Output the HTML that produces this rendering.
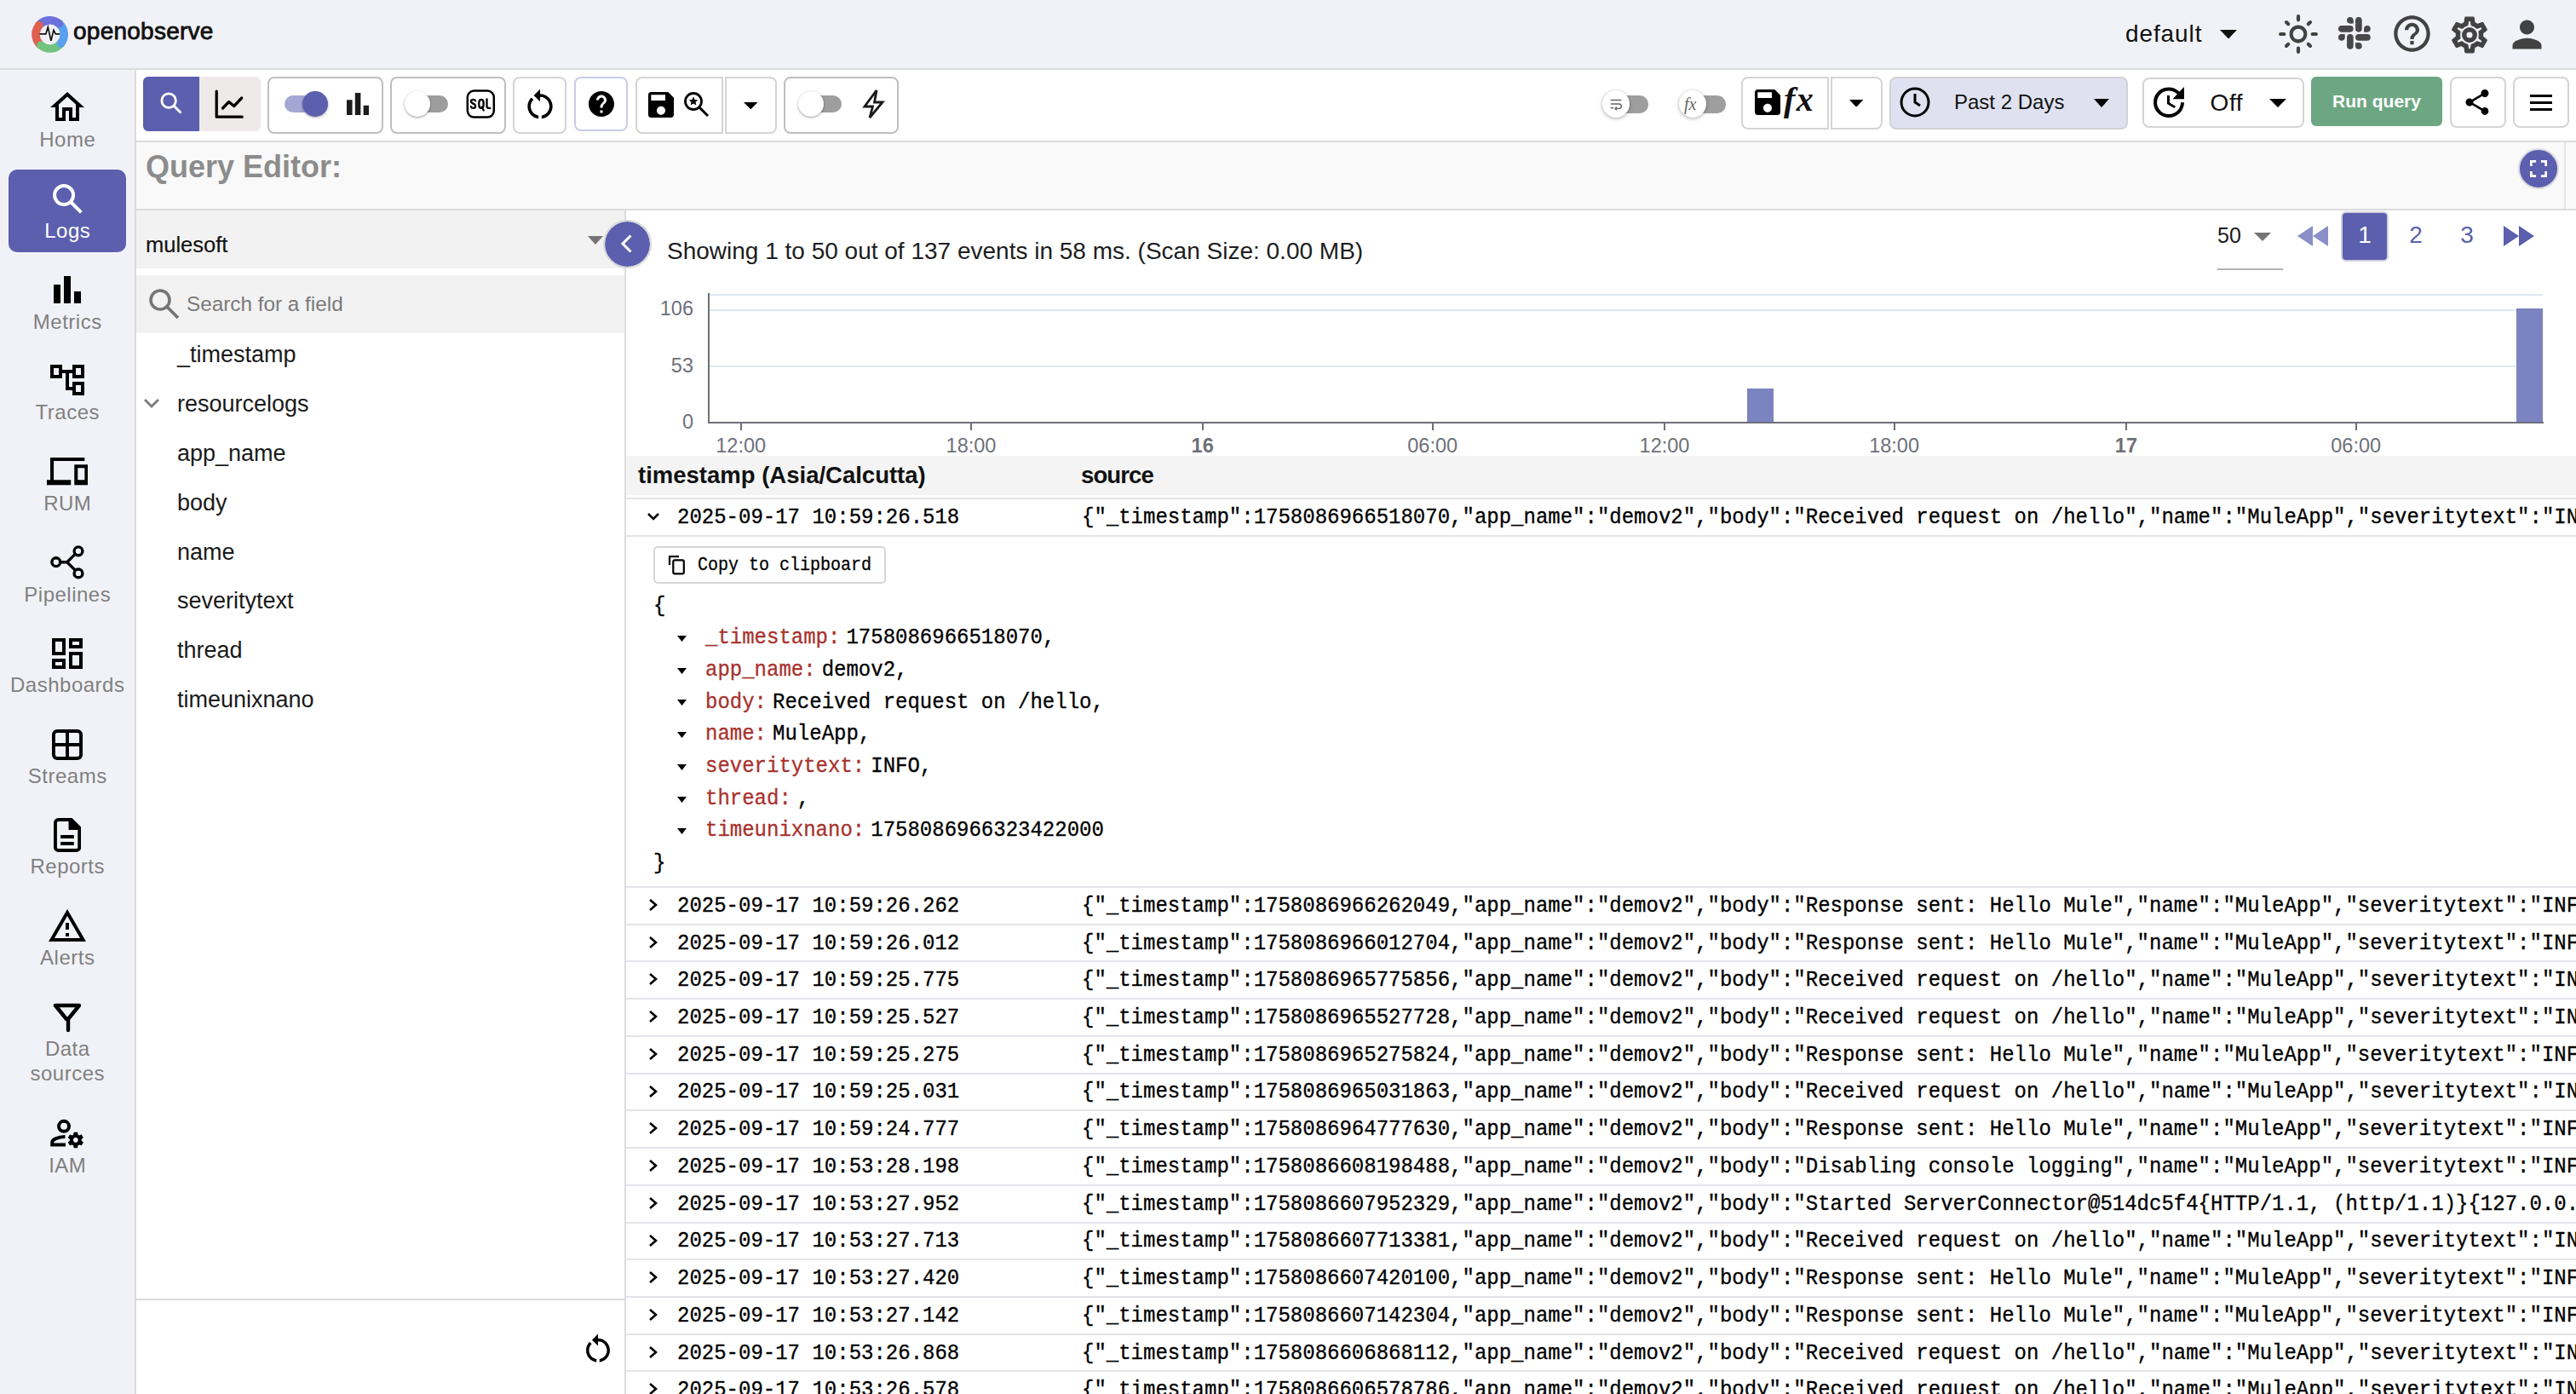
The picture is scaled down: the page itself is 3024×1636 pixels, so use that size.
<!DOCTYPE html>
<html><head><meta charset="utf-8"><title>OpenObserve Logs</title>
<style>
html,body{margin:0;padding:0;width:3024px;height:1636px;overflow:hidden;background:#fff;}
#root{position:relative;width:3024px;height:1636px;overflow:hidden;background:#fff;font-family:'Liberation Sans', sans-serif;}
</style></head><body><div id="root">
<div style="position:absolute;left:0px;top:0px;width:3024px;height:80px;background:#f1f2f7"></div><div style="position:absolute;left:0px;top:80px;width:3024px;height:2px;background:#dcdcdc"></div><svg style="position:absolute;left:37px;top:18.5px;" width="43" height="43" viewBox="0 0 43 43"><g fill="none" stroke-width="9.6"><path d="M8.88 10.73A16.6 16.6 0 0 1 32.27 8.68" stroke="#6c71dc"/><path d="M32.27 8.68A16.6 16.6 0 0 1 34.32 32.07" stroke="#58a0ef"/><path d="M34.32 32.07A16.6 16.6 0 0 1 10.93 34.12" stroke="#72c47e"/><path d="M10.93 34.12A16.6 16.6 0 0 1 8.88 10.73" stroke="#e0604f"/></g><circle cx="32.27" cy="8.68" r="4.8" fill="#6c71dc"/><circle cx="34.32" cy="32.07" r="4.8" fill="#58a0ef"/><circle cx="10.93" cy="34.12" r="4.8" fill="#72c47e"/><circle cx="8.88" cy="10.73" r="4.8" fill="#e0604f"/><path d="M9.5 20.9H16.8L19.3 12.9L22.9 28.9L26 16.4L28.3 20.9H33.2" fill="none" stroke="#111" stroke-width="1.7"/></svg><div style="position:absolute;left:86px;top:23.30px;font-family:'Liberation Sans', sans-serif;font-size:28px;line-height:28px;color:#111;font-weight:400;white-space:pre;letter-spacing:0.25px;-webkit-text-stroke:0.8px #111">openobserve</div><div style="position:absolute;left:2495px;top:26.10px;font-family:'Liberation Sans', sans-serif;font-size:28px;line-height:28px;color:#111;font-weight:400;white-space:pre;letter-spacing:0.9px">default</div><svg style="position:absolute;left:2606px;top:35px;" width="20" height="10.5" viewBox="0 0 20 10.5"><path d="M0 0h20L10 10.5z" fill="#111"/></svg><svg style="position:absolute;left:2673px;top:15px;" width="50" height="50" viewBox="0 0 24 24"><path fill="#424242" d="M12 9c1.65 0 3 1.35 3 3s-1.35 3-3 3-3-1.35-3-3 1.35-3 3-3m0-2c-2.76 0-5 2.24-5 5s2.24 5 5 5 5-2.24 5-5-2.24-5-5-5zM2 13h2c.55 0 1-.45 1-1s-.45-1-1-1H2c-.55 0-1 .45-1 1s.45 1 1 1zm18 0h2c.55 0 1-.45 1-1s-.45-1-1-1h-2c-.55 0-1 .45-1 1s.45 1 1 1zM11 2v2c0 .55.45 1 1 1s1-.45 1-1V2c0-.55-.45-1-1-1s-1 .45-1 1zm0 18v2c0 .55.45 1 1 1s1-.45 1-1v-2c0-.55-.45-1-1-1s-1 .45-1 1zM5.99 4.58c-.39-.39-1.030-.39-1.41 0-.39.39-.39 1.03 0 1.41l1.06 1.06c.39.39 1.03.39 1.41 0s.39-1.03 0-1.41L5.99 4.58zm12.37 12.37c-.39-.39-1.03-.39-1.41 0-.39.39-.39 1.03 0 1.41l1.06 1.06c.39.39 1.03.39 1.41 0 .39-.39.39-1.03 0-1.41l-1.06-1.06zm1.06-10.96c.39-.39.39-1.03 0-1.41-.39-.39-1.03-.39-1.41 0l-1.06 1.06c-.39.39-.39 1.03 0 1.41s1.03.39 1.41 0l1.06-1.06zM7.05 18.36c.39-.39.39-1.03 0-1.41-.39-.39-1.03-.39-1.41 0l-1.06 1.06c-.39.39-.39 1.03 0 1.41s1.03.39 1.41 0l1.06-1.06z"/></svg><svg style="position:absolute;left:2745px;top:20px;" width="38" height="38" viewBox="0 0 38 38"><g fill="#48484a"><circle cx="13.85" cy="3.81" r="3.81"/><rect x="13.85" y="3.81" width="3.81" height="3.81"/><rect x="20.08" y="0.00" width="7.63" height="17.68" rx="3.81"/><rect x="0.00" y="10.04" width="17.68" height="7.63" rx="3.81"/><circle cx="33.93" cy="13.85" r="3.81"/><rect x="30.12" y="13.85" width="3.81" height="3.81"/><circle cx="3.81" cy="23.89" r="3.81"/><rect x="3.81" y="20.08" width="3.81" height="3.81"/><rect x="10.04" y="20.08" width="7.63" height="17.68" rx="3.81"/><rect x="20.08" y="20.08" width="17.68" height="7.63" rx="3.81"/><circle cx="23.89" cy="33.93" r="3.81"/><rect x="20.08" y="30.12" width="3.81" height="3.81"/></g></svg><svg style="position:absolute;left:2806px;top:14px;" width="51" height="51" viewBox="0 0 24 24"><path fill="#424242" d="M11 18h2v-2h-2v2zm1-16C6.48 2 2 6.48 2 12s4.48 10 10 10 10-4.48 10-10S17.52 2 12 2zm0 18c-4.41 0-8-3.59-8-8s3.59-8 8-8 8 3.59 8 8-3.59 8-8 8zm0-14c-2.21 0-4 1.79-4 4h2c0-1.1.9-2 2-2s2 .9 2 2c0 2-3 1.75-3 5h2c0-2.25 3-2.5 3-5 0-2.21-1.79-4-4-4z"/></svg><svg style="position:absolute;left:2874px;top:16px;" width="50" height="50" viewBox="0 0 24 24"><path fill="#424242" d="M19.43 12.98c.04-.32.07-.64.07-.98 0-.34-.03-.66-.07-.98l2.11-1.65c.19-.15.24-.42.12-.64l-2-3.46c-.09-.16-.26-.25-.44-.25-.06 0-.12.01-.17.03l-2.49 1c-.52-.4-1.08-.73-1.69-.98l-.38-2.65C14.46 2.18 14.25 2 14 2h-4c-.25 0-.46.18-.49.42l-.38 2.65c-.61.25-1.17.59-1.690.98l-2.49-1c-.06-.02-.12-.03-.18-.03-.17 0-.34.09-.43.25l-2 3.46c-.13.22-.07.49.12.64l2.11 1.65c-.04.32-.07.65-.07.98 0 .33.03.66.07.98l-2.11 1.65c-.19.15-.24.42-.12.64l2 3.46c.09.16.26.25.44.25.06 0 .12-.01.17-.03l2.49-1c.52.4 1.08.73 1.69.98l.38 2.65c.03.24.24.42.49.42h4c.25 0 .46-.18.49-.42l.38-2.65c.61-.25 1.17-.59 1.69-.98l2.49 1c.06.02.12.03.18.03.17 0 .34-.09.43-.25l2-3.46c.12-.22.07-.49-.12-.64l-2.11-1.65zm-1.98-1.71c.04.31.05.52.05.73 0 .21-.02.43-.05.73l-.14 1.13.89.7 1.08.84-.7 1.21-1.27-.51-1.04-.42-.9.68c-.43.32-.84.56-1.25.73l-1.06.43-.16 1.13-.2 1.35h-1.4l-.19-1.35-.16-1.13-1.06-.43c-.43-.18-.83-.41-1.23-.71l-.91-.7-1.06.43-1.27.51-.7-1.21 1.08-.84.89-.7-.14-1.13c-.03-.31-.05-.54-.05-.74s.02-.43.05-.73l.14-1.13-.89-.7-1.08-.84.7-1.21 1.27.51 1.04.42.9-.68c.43-.32.84-.56 1.25-.73l1.06-.43.16-1.13.2-1.35h1.39l.19 1.35.16 1.13 1.06.43c.43.18.83.41 1.23.71l.91.7 1.06-.43 1.27-.51.7 1.21-1.07.85-.89.7.14 1.13zM12 8c-2.21 0-4 1.79-4 4s1.79 4 4 4 4-1.79 4-4-1.790-4-4-4zm0 6c-1.1 0-2-.9-2-2s.9-2 2-2 2 .9 2 2-.9 2-2 2z" stroke="#424242" stroke-width="0.6"/></svg><svg style="position:absolute;left:2940.5px;top:14.5px;" width="51" height="51" viewBox="0 0 24 24"><path fill="#424242" d="M12 12c2.21 0 4-1.79 4-4s-1.79-4-4-4-4 1.79-4 4 1.79 4 4 4zm0 2c-2.67 0-8 1.34-8 4v2h16v-2c0-2.66-5.33-4-8-4z"/></svg><div style="position:absolute;left:0px;top:82px;width:158px;height:1554px;background:#f1f2f7"></div><div style="position:absolute;left:158px;top:82px;width:2px;height:1554px;background:#dcdcdc"></div><div style="position:absolute;left:10px;top:199px;width:138px;height:97px;background:#5b5fae;border-radius:10px"></div><div style="position:absolute;left:-421px;width:1000px;text-align:center;top:152.28px;font-family:'Liberation Sans', sans-serif;font-size:24px;line-height:24px;color:#808080;font-weight:400;white-space:pre;letter-spacing:0.5px;text-indent:0.5px">Home</div><div style="position:absolute;left:-421px;width:1000px;text-align:center;top:258.93px;font-family:'Liberation Sans', sans-serif;font-size:24px;line-height:24px;color:#fff;font-weight:400;white-space:pre;letter-spacing:0.5px;text-indent:0.5px">Logs</div><div style="position:absolute;left:-421px;width:1000px;text-align:center;top:365.58px;font-family:'Liberation Sans', sans-serif;font-size:24px;line-height:24px;color:#808080;font-weight:400;white-space:pre;letter-spacing:0.5px;text-indent:0.5px">Metrics</div><div style="position:absolute;left:-421px;width:1000px;text-align:center;top:472.23px;font-family:'Liberation Sans', sans-serif;font-size:24px;line-height:24px;color:#808080;font-weight:400;white-space:pre;letter-spacing:0.5px;text-indent:0.5px">Traces</div><div style="position:absolute;left:-421px;width:1000px;text-align:center;top:578.88px;font-family:'Liberation Sans', sans-serif;font-size:24px;line-height:24px;color:#808080;font-weight:400;white-space:pre;letter-spacing:0.5px;text-indent:0.5px">RUM</div><div style="position:absolute;left:-421px;width:1000px;text-align:center;top:685.53px;font-family:'Liberation Sans', sans-serif;font-size:24px;line-height:24px;color:#808080;font-weight:400;white-space:pre;letter-spacing:0.5px;text-indent:0.5px">Pipelines</div><div style="position:absolute;left:-421px;width:1000px;text-align:center;top:792.18px;font-family:'Liberation Sans', sans-serif;font-size:24px;line-height:24px;color:#808080;font-weight:400;white-space:pre;letter-spacing:0.5px;text-indent:0.5px">Dashboards</div><div style="position:absolute;left:-421px;width:1000px;text-align:center;top:898.83px;font-family:'Liberation Sans', sans-serif;font-size:24px;line-height:24px;color:#808080;font-weight:400;white-space:pre;letter-spacing:0.5px;text-indent:0.5px">Streams</div><div style="position:absolute;left:-421px;width:1000px;text-align:center;top:1005.48px;font-family:'Liberation Sans', sans-serif;font-size:24px;line-height:24px;color:#808080;font-weight:400;white-space:pre;letter-spacing:0.5px;text-indent:0.5px">Reports</div><div style="position:absolute;left:-421px;width:1000px;text-align:center;top:1112.13px;font-family:'Liberation Sans', sans-serif;font-size:24px;line-height:24px;color:#808080;font-weight:400;white-space:pre;letter-spacing:0.5px;text-indent:0.5px">Alerts</div><div style="position:absolute;left:-421px;width:1000px;text-align:center;top:1219.28px;font-family:'Liberation Sans', sans-serif;font-size:24px;line-height:24px;color:#808080;font-weight:400;white-space:pre;letter-spacing:0.5px;text-indent:0.5px">Data</div><div style="position:absolute;left:-421px;width:1000px;text-align:center;top:1247.98px;font-family:'Liberation Sans', sans-serif;font-size:24px;line-height:24px;color:#808080;font-weight:400;white-space:pre;letter-spacing:0.5px;text-indent:0.5px">sources</div><div style="position:absolute;left:-421px;width:1000px;text-align:center;top:1355.68px;font-family:'Liberation Sans', sans-serif;font-size:24px;line-height:24px;color:#808080;font-weight:400;white-space:pre;letter-spacing:0.5px;text-indent:0.5px">IAM</div><svg style="position:absolute;left:55px;top:102px;" width="48" height="48" viewBox="0 0 24 24"><path fill="#000" d="M12 5.69l5 4.5V18h-2v-6H9v6H7v-7.81l5-4.5M12 3L2 12h3v8h6v-6h2v6h6v-8h3L12 3z"/></svg><svg style="position:absolute;left:58px;top:212px;" width="44" height="44" viewBox="0 0 40 40"><circle cx="15.5" cy="15.5" r="10" fill="none" stroke="#fff" stroke-width="3.6"/><path d="M22.5 22.5L34 34" stroke="#fff" stroke-width="3.6" stroke-linecap="butt"/></svg><svg style="position:absolute;left:63px;top:324px;" width="32" height="32" viewBox="160 160 640 640"><path fill="#000" d="M640 800v-280h160v280zM400 800v-640h160v640zM160 800v-440h160v440z"/></svg><svg style="position:absolute;left:55px;top:422px;" width="48" height="48" viewBox="0 0 24 24"><path fill="#000" d="M22 11V3h-7v3H9V3H2v8h7V8h2v10h4v3h7v-8h-7v3h-2V8h2v3h7zM7 9H4V5h3v4zm10 6h3v4h-3v-4zm0-10h3v4h-3V5z"/></svg><svg style="position:absolute;left:54.6px;top:528.7px;" width="48.4" height="48.4" viewBox="0 0 24 24"><path fill="#000" d="M4 6h18V4H2v13H0v3h14v-3H4V6zm20 2h-8v12h8V8zm-2 9h-4v-7h4v7z"/></svg><svg style="position:absolute;left:55px;top:636px;" width="48" height="48" viewBox="0 0 48 48"><g fill="none" stroke="#000" stroke-width="3.4"><circle cx="10.8" cy="23.7" r="4.9"/><circle cx="37" cy="10.8" r="4.9"/><circle cx="37" cy="36.9" r="4.9"/><path d="M15.7 23.7H23.7L33.5 14.1M23.7 23.7L33.5 33.4"/></g></svg><svg style="position:absolute;left:55px;top:742.8px;" width="48" height="48" viewBox="0 0 24 24"><path fill="#000" d="M19 5v2h-4V5h4M9 5v6H5V5h4m10 8v6h-4v-6h4M9 17v2H5v-2h4M21 3h-8v6h8V3zM11 3H3v10h8V3zm10 8h-8v10h8V11zm-10 4H3v6h8v-6z"/></svg><svg style="position:absolute;left:61px;top:855.5px;" width="36" height="36" viewBox="0 0 36 36"><g fill="none" stroke="#000" stroke-width="3.9"><rect x="1.95" y="1.95" width="32.1" height="32.1" rx="4.2"/><path d="M18 2v32M2 18h32"/></g></svg><svg style="position:absolute;left:63px;top:960px;" width="32.2" height="40" viewBox="0 0 32.2 40"><path d="M1.95 5.5a3.5 3.5 0 0 1 3.5-3.5H20L30.25 12.3V34.5a3.5 3.5 0 0 1-3.5 3.5H5.45a3.5 3.5 0 0 1-3.5-3.5Z" fill="none" stroke="#000" stroke-width="3.9" stroke-linejoin="round"/><path d="M17.6 0H21.5L32.2 10.7V14.1H17.6Z" fill="#000"/><rect x="8.1" y="20" width="15.7" height="4" fill="#000"/><rect x="8.1" y="28" width="15.7" height="4" fill="#000"/></svg><svg style="position:absolute;left:55.0px;top:1063.0px;" width="48" height="48" viewBox="0 0 24 24"><g fill="#000"><path d="M12 5.99L19.53 19H4.47L12 5.99M12 2L1 21h22L12 2zm1 14h-2v2h2v-2zm0-6h-2v4h2v-4z"/></g></svg><svg style="position:absolute;left:62px;top:1177px;" width="34" height="35" viewBox="0 0 34 35"><path d="M3 3h28L18 19v13M16 19L3 3" fill="none" stroke="#000" stroke-width="4.4" stroke-linejoin="round" stroke-linecap="round"/></svg><svg style="position:absolute;left:55px;top:1308px;" width="45" height="42" viewBox="55 1308 45 42"><g fill="none" stroke="#000" stroke-width="4"><circle cx="75" cy="1321.8" r="6"/><path d="M76.5 1334C68.5 1334.3 61.2 1337 61.2 1340.8V1343.6H77"/></g><path transform="translate(77.3 1326.4) scale(0.96)" fill="#000" d="M19.14 12.94c.04-.3.06-.61.06-.94 0-.32-.02-.64-.07-.94l2.03-1.58c.18-.14.23-.41.12-.61l-1.92-3.32c-.12-.22-.37-.29-.59-.22l-2.39.96c-.5-.38-1.03-.7-1.62-.94l-.36-2.54c-.04-.24-.24-.41-.48-.41h-3.84c-.24 0-.43.17-.47.41l-.36 2.54c-.59.24-1.13.57-1.62.94l-2.39-.96c-.22-.08-.47 0-.59.22L2.74 8.87c-.12.21-.08.47.12.61l2.03 1.58c-.05.3-.09.63-.09.94s.02.64.07.94l-2.03 1.58c-.18.14-.23.41-.12.61l1.92 3.32c.12.22.37.29.59.22l2.39-.96c.5.38 1.03.7 1.62.94l.36 2.54c.05.24.24.41.48.41h3.840c.24 0 .44-.17.47-.41l.36-2.54c.59-.24 1.13-.56 1.62-.94l2.39.96c.22.08.47 0 .59-.22l1.92-3.32c.12-.22.07-.47-.12-.61l-2.01-1.58zM12 15c-1.65 0-3-1.35-3-3s1.35-3 3-3 3 1.35 3 3-1.35 3-3 3z"/></svg><div style="position:absolute;left:160px;top:165px;width:2864px;height:2px;background:#dcdcdc"></div><div style="position:absolute;left:168px;top:90px;width:66px;height:64px;background:#5b5fae;border-radius:6px 0 0 6px"></div><div style="position:absolute;left:234px;top:90px;width:72px;height:64px;background:#eeeaea;border-radius:0 6px 6px 0"></div><svg style="position:absolute;left:185.6px;top:106px;" width="33" height="33" viewBox="0 0 30 30"><circle cx="11" cy="11" r="7.5" fill="none" stroke="#fff" stroke-width="2.6"/><path d="M16.5 16.5L24 24" stroke="#fff" stroke-width="2.6"/></svg><svg style="position:absolute;left:251px;top:104px;" width="37" height="37" viewBox="0 0 37 37"><path d="M3.2 3.2v30h30" fill="none" stroke="#000" stroke-width="3.3" stroke-linecap="round" stroke-linejoin="round"/><path d="M10.5 23l7.2-7.5 6 5 9-9.5" fill="none" stroke="#000" stroke-width="3.3" stroke-linecap="round" stroke-linejoin="round"/></svg><div style="position:absolute;left:314px;top:90px;width:136px;height:67px;box-sizing:border-box;border:2px solid #bfbfbf;border-radius:8px"></div><div style="position:absolute;left:334px;top:112px;width:50px;height:20px;background:#a4a7d4;border-radius:10px"></div><div style="position:absolute;left:355px;top:107px;width:30px;height:30px;background:#5b5fae;border-radius:50%;box-shadow:0 1px 3px rgba(0,0,0,.35)"></div><svg style="position:absolute;left:406.9px;top:108.8px;" width="26.2" height="26.2" viewBox="160 160 640 640"><path fill="#1c1c1c" d="M640 800v-280h160v280zM400 800v-640h160v640zM160 800v-440h160v440z"/></svg><div style="position:absolute;left:458px;top:90px;width:136px;height:67px;box-sizing:border-box;border:2px solid #bfbfbf;border-radius:8px"></div><div style="position:absolute;left:476px;top:112px;width:50px;height:20px;background:#9e9e9e;border-radius:10px"></div><div style="position:absolute;left:475px;top:107px;width:30px;height:30px;background:#fff;border-radius:50%;box-shadow:0 1px 3px rgba(0,0,0,.4)"></div><svg style="position:absolute;left:546px;top:104px;" width="36" height="36" viewBox="0 0 36 36"><rect x="2.8" y="2.6" width="31" height="31" rx="7.5" fill="none" stroke="#000" stroke-width="2.5"/><g fill="none" stroke="#000" stroke-width="2.3" stroke-linecap="round" stroke-linejoin="round"><path d="M12.1 14.2C11.6 13.2 10.6 12.8 9.5 12.8C7.9 12.8 7 13.7 7 15C7 16.5 8.3 17.1 9.6 17.6C11.1 18.2 12.1 18.9 12.1 20.5C12.1 22 11 22.9 9.5 22.9C8.2 22.9 7.2 22.3 6.9 21.2"/><path d="M18.95 12.8C17.3 12.8 16.3 14.1 16.3 16.5V19.2C16.3 21.6 17.3 22.9 18.95 22.9C20.6 22.9 21.6 21.6 21.6 19.2V16.5C21.6 14.1 20.6 12.8 18.95 12.8ZM19.8 21.6L21.7 25.4"/><path d="M25.5 12.3V20.6C25.5 22.2 26.1 22.9 27.4 22.9H29.3"/></g></svg><div style="position:absolute;left:602px;top:90px;width:63px;height:67px;box-sizing:border-box;border:2px solid #d4d4d4;border-radius:8px"></div><svg style="position:absolute;left:612px;top:101px;" width="44" height="44" viewBox="0 0 24 24"><path fill="#000" d="M12 5V2L8 6l4 4V7c3.31 0 6 2.69 6 6 0 2.97-2.17 5.43-5 5.91v2.02c3.95-.49 7-3.85 7-7.93 0-4.42-3.58-8-8-8zm-6 8c0-1.65.67-3.15 1.76-4.24L6.34 7.34C4.9 8.79 4 10.79 4 13c0 4.08 3.05 7.44 7 7.93v-2.02c-2.83-.48-5-2.94-5-5.91z"/></svg><div style="position:absolute;left:674px;top:90px;width:63px;height:64px;box-sizing:border-box;border:2px solid #c9cbe8;border-radius:8px"></div><svg style="position:absolute;left:688px;top:104px;" width="36" height="36" viewBox="0 0 24 24"><path fill="#000" d="M12 2C6.48 2 2 6.48 2 12s4.48 10 10 10 10-4.48 10-10S17.52 2 12 2zm1 17h-2v-2h2v2zm2.07-7.75l-.9.92C13.45 12.9 13 13.5 13 15h-2v-.5c0-1.1.45-2.1 1.17-2.83l1.24-1.26c.37-.36.59-.86.59-1.41 0-1.1-.9-2-2-2s-2 .9-2 2H8c0-2.21 1.79-4 4-4s4 1.79 4 4c0 .88-.36 1.68-.93 2.25z"/></svg><div style="position:absolute;left:746px;top:90px;width:103px;height:67px;box-sizing:border-box;border:2px solid #d4d4d4;border-radius:8px 0 0 8px"></div><div style="position:absolute;left:851px;top:90px;width:61px;height:67px;box-sizing:border-box;border:2px solid #d4d4d4;border-radius:0 8px 8px 0"></div><svg style="position:absolute;left:756px;top:103px;" width="40" height="40" viewBox="0 0 24 24"><path fill="#000" d="M17 3H5c-1.11 0-2 .9-2 2v14c0 1.1.89 2 2 2h14c1.1 0 2-.9 2-2V7l-4-4zm-5 16c-1.66 0-3-1.34-3-3s1.34-3 3-3 3 1.34 3 3-1.34 3-3 3zm3-10H5V5h10v4z"/></svg><svg style="position:absolute;left:802px;top:107px;" width="32" height="32" viewBox="0 0 32 32"><circle cx="12" cy="12" r="9.5" fill="none" stroke="#000" stroke-width="2.8"/><path d="M19 19l10 10" stroke="#000" stroke-width="3"/><path d="M12 6.5l1.6 3.4 3.7.4-2.8 2.5.8 3.6-3.3-1.9-3.3 1.9.8-3.6-2.8-2.5 3.7-.4z" fill="#000"/></svg><svg style="position:absolute;left:872.6px;top:120px;" width="16.6" height="8.3" viewBox="0 0 16.6 8.3"><path d="M0 0h16.6L8.3 8.3z" fill="#000"/></svg><div style="position:absolute;left:920px;top:90px;width:135px;height:67px;box-sizing:border-box;border:2px solid #bfbfbf;border-radius:8px"></div><div style="position:absolute;left:938px;top:112px;width:50px;height:20px;background:#9e9e9e;border-radius:10px"></div><div style="position:absolute;left:937px;top:107px;width:30px;height:30px;background:#fff;border-radius:50%;box-shadow:0 1px 3px rgba(0,0,0,.4)"></div><svg style="position:absolute;left:1009px;top:103px;" width="36" height="38" viewBox="0 0 36 38"><path d="M20 3L6 22h9.5l-3.5 13 15-18h-9.5z" fill="none" stroke="#1a1a1a" stroke-width="2.8" stroke-linejoin="miter"/></svg><div style="position:absolute;left:1897px;top:112px;width:38px;height:21px;background:#9e9e9e;border-radius:10px"></div><div style="position:absolute;left:1881px;top:106px;width:32px;height:32px;background:#fff;border-radius:50%;box-shadow:0 1px 4px rgba(0,0,0,.35)"></div><svg style="position:absolute;left:1888px;top:113px;" width="18" height="18" viewBox="0 0 20 20"><path d="M3 5h14M3 10h11a3 3 0 0 1 0 6h-4M3 15h4" fill="none" stroke="#666" stroke-width="1.6"/><path d="M11 14l-2 2 2 2" fill="none" stroke="#666" stroke-width="1.6"/></svg><div style="position:absolute;left:1991px;top:112px;width:35px;height:21px;background:#9e9e9e;border-radius:10px"></div><div style="position:absolute;left:1971px;top:106px;width:32px;height:32px;background:#fff;border-radius:50%;box-shadow:0 1px 4px rgba(0,0,0,.35)"></div><div style="position:absolute;left:1977px;top:112.07px;font-family:'Liberation Sans', sans-serif;font-size:20px;line-height:20px;color:#666;font-weight:400;white-space:pre;font-family:'Liberation Serif';font-style:italic">fx</div><div style="position:absolute;left:2044px;top:90px;width:103px;height:62px;box-sizing:border-box;border:2px solid #d4d4d4;border-radius:8px 0 0 8px"></div><div style="position:absolute;left:2149px;top:90px;width:61px;height:62px;box-sizing:border-box;border:2px solid #d4d4d4;border-radius:0 8px 8px 0"></div><svg style="position:absolute;left:2055px;top:100px;" width="40" height="40" viewBox="0 0 24 24"><path fill="#000" d="M17 3H5c-1.11 0-2 .9-2 2v14c0 1.1.89 2 2 2h14c1.1 0 2-.9 2-2V7l-4-4zm-5 16c-1.66 0-3-1.34-3-3s1.34-3 3-3 3 1.34 3 3-1.34 3-3 3zm3-10H5V5h10v4z"/></svg><div style="position:absolute;left:2094px;top:97.14px;font-family:'Liberation Sans', sans-serif;font-size:40px;line-height:40px;color:#111;font-weight:700;white-space:pre;font-family:'Liberation Serif';font-style:italic;letter-spacing:1.5px">fx</div><svg style="position:absolute;left:2171px;top:116.6px;" width="16.3" height="8.8" viewBox="0 0 16.3 8.8"><path d="M0 0h16.3L8.15 8.8z" fill="#000"/></svg><div style="position:absolute;left:2218px;top:90px;width:280px;height:62px;box-sizing:border-box;background:#dfe1f0;border:2px solid #d2d2d6;border-radius:8px"></div><svg style="position:absolute;left:2229px;top:101px;" width="38" height="38" viewBox="0 0 38 38"><circle cx="19" cy="19" r="16" fill="none" stroke="#000" stroke-width="3"/><path d="M19 9v10l6 4" fill="none" stroke="#000" stroke-width="3"/></svg><div style="position:absolute;left:2294px;top:107.98px;font-family:'Liberation Sans', sans-serif;font-size:24px;line-height:24px;color:#111;font-weight:400;white-space:pre;">Past 2 Days</div><svg style="position:absolute;left:2458px;top:116px;" width="18" height="10" viewBox="0 0 18 10"><path d="M0 0h18L9 10z" fill="#000"/></svg><div style="position:absolute;left:2514.5px;top:90.5px;width:190px;height:59px;box-sizing:border-box;border:2px solid #d4d4d4;border-radius:8px"></div><svg style="position:absolute;left:2522.1px;top:96px;" width="48" height="48" viewBox="0 0 24 24"><path fill="#000" d="M21 10.12h-6.78l2.74-2.82c-2.73-2.7-7.15-2.8-9.88-.1-2.73 2.71-2.73 7.08 0 9.79s7.15 2.71 9.88 0C18.32 15.65 19 14.08 19 12.1h2c0 1.98-.88 4.55-2.64 6.29-3.51 3.48-9.21 3.48-12.72 0-3.5-3.47-3.53-9.11-.02-12.58s9.14-3.47 12.65 0L21 3v7.12zM12.5 8v4.25l3.5 2.08-.72 1.21L11 13V8h1.5z"/></svg><div style="position:absolute;left:2594.5px;top:106.80px;font-family:'Liberation Sans', sans-serif;font-size:28px;line-height:28px;color:#111;font-weight:400;white-space:pre;letter-spacing:0.6px">Off</div><svg style="position:absolute;left:2664px;top:116px;" width="20" height="10" viewBox="0 0 20 10"><path d="M0 0h20L10 10z" fill="#000"/></svg><div style="position:absolute;left:2713px;top:90px;width:154px;height:58px;background:#6da682;border-radius:6px"></div><div style="position:absolute;left:2290px;width:1000px;text-align:center;top:108.22px;font-family:'Liberation Sans', sans-serif;font-size:21px;line-height:21px;color:#fff;font-weight:700;white-space:pre;">Run query</div><div style="position:absolute;left:2876px;top:90.3px;width:66px;height:59.5px;box-sizing:border-box;border:2px solid #d4d4d4;border-radius:8px"></div><svg style="position:absolute;left:2890px;top:102px;" width="36" height="36" viewBox="0 0 24 24"><path fill="#000" d="M18 16.08c-.76 0-1.44.3-1.96.77L8.91 12.7c.05-.23.09-.46.09-.7s-.04-.47-.09-.7l7.05-4.11c.54.5 1.25.81 2.04.81 1.66 0 3-1.34 3-3s-1.34-3-3-3-3 1.34-3 3c0 .24.04.47.09.7L8.04 9.81C7.5 9.31 6.79 9 6 9c-1.66 0-3 1.34-3 3s1.34 3 3 3c.79 0 1.5-.31 2.04-.81l7.12 4.16c-.05.21-.08.43-.08.65 0 1.61 1.31 2.92 2.92 2.92 1.61 0 2.92-1.31 2.92-2.92s-1.31-2.92-2.92-2.92z"/></svg><div style="position:absolute;left:2950px;top:90.3px;width:66px;height:59.5px;box-sizing:border-box;border:2px solid #d4d4d4;border-radius:8px"></div><div style="position:absolute;left:2970px;top:111px;width:26px;height:3px;background:#000"></div><div style="position:absolute;left:2970px;top:119px;width:26px;height:3px;background:#000"></div><div style="position:absolute;left:2970px;top:127px;width:26px;height:3px;background:#000"></div><div style="position:absolute;left:160px;top:167px;width:2864px;height:78px;background:#f9f9f9"></div><div style="position:absolute;left:160px;top:245px;width:2864px;height:2px;background:#dcdcdc"></div><div style="position:absolute;left:171px;top:177.53px;font-family:'Liberation Sans', sans-serif;font-size:36px;line-height:36px;color:#8c8c8c;font-weight:700;white-space:pre;">Query Editor:</div><div style="position:absolute;left:2956px;top:174px;width:48px;height:48px;box-sizing:border-box;background:#5b5fae;border-radius:50%;border:2px solid #d9d9de"></div><svg style="position:absolute;left:2970px;top:188px;" width="20" height="20" viewBox="0 0 20 20"><path d="M1.35 7.1V1.35H7.1M12.9 1.35h5.75V7.1M18.65 12.9v5.75H12.9M7.1 18.65H1.35V12.9" fill="none" stroke="#fff" stroke-width="2.7"/></svg><div style="position:absolute;left:3010px;top:167px;width:2px;height:78px;background:#e4e4e4"></div><div style="position:absolute;left:160px;top:247px;width:573px;height:68px;background:#f2f2f2"></div><div style="position:absolute;left:171px;top:274.91px;font-family:'Liberation Sans', sans-serif;font-size:25.5px;line-height:25.5px;color:#141414;font-weight:400;white-space:pre;;-webkit-text-stroke:0.2px #141414">mulesoft</div><svg style="position:absolute;left:690px;top:277px;" width="18" height="10" viewBox="0 0 18 10"><path d="M0 0h18L9 10z" fill="#757575"/></svg><div style="position:absolute;left:160px;top:323px;width:573px;height:68px;background:#f2f2f2"></div><svg style="position:absolute;left:172px;top:336px;" width="42" height="42" viewBox="0 0 42 42"><circle cx="16" cy="16" r="11" fill="none" stroke="#757575" stroke-width="3.6"/><path d="M24 24L37 37" stroke="#757575" stroke-width="3.8"/></svg><div style="position:absolute;left:219px;top:344.83px;font-family:'Liberation Sans', sans-serif;font-size:24.3px;line-height:24.3px;color:#7a7a7a;font-weight:400;white-space:pre;">Search for a field</div><div style="position:absolute;left:733px;top:247px;width:2px;height:1389px;background:#dcdcdc"></div><div style="position:absolute;left:208px;top:403.44px;font-family:'Liberation Sans', sans-serif;font-size:27px;line-height:27px;color:#1a1a1a;font-weight:400;white-space:pre;">_timestamp</div><div style="position:absolute;left:208px;top:461.24px;font-family:'Liberation Sans', sans-serif;font-size:27px;line-height:27px;color:#1a1a1a;font-weight:400;white-space:pre;">resourcelogs</div><div style="position:absolute;left:208px;top:519.04px;font-family:'Liberation Sans', sans-serif;font-size:27px;line-height:27px;color:#1a1a1a;font-weight:400;white-space:pre;">app_name</div><div style="position:absolute;left:208px;top:576.84px;font-family:'Liberation Sans', sans-serif;font-size:27px;line-height:27px;color:#1a1a1a;font-weight:400;white-space:pre;">body</div><div style="position:absolute;left:208px;top:634.64px;font-family:'Liberation Sans', sans-serif;font-size:27px;line-height:27px;color:#1a1a1a;font-weight:400;white-space:pre;">name</div><div style="position:absolute;left:208px;top:692.44px;font-family:'Liberation Sans', sans-serif;font-size:27px;line-height:27px;color:#1a1a1a;font-weight:400;white-space:pre;">severitytext</div><div style="position:absolute;left:208px;top:750.24px;font-family:'Liberation Sans', sans-serif;font-size:27px;line-height:27px;color:#1a1a1a;font-weight:400;white-space:pre;">thread</div><div style="position:absolute;left:208px;top:808.04px;font-family:'Liberation Sans', sans-serif;font-size:27px;line-height:27px;color:#1a1a1a;font-weight:400;white-space:pre;">timeunixnano</div><svg style="position:absolute;left:168px;top:467px;" width="20" height="14" viewBox="0 0 20 14"><path d="M2 2l8 8 8-8" fill="none" stroke="#7a7a7a" stroke-width="2.8"/></svg><div style="position:absolute;left:160px;top:1524px;width:573px;height:2px;background:#dcdcdc"></div><svg style="position:absolute;left:680.6px;top:1562.4px;" width="42" height="42" viewBox="0 0 24 24"><path fill="#000" d="M12 5V2L8 6l4 4V7c3.31 0 6 2.69 6 6 0 2.97-2.17 5.43-5 5.91v2.02c3.95-.49 7-3.85 7-7.93 0-4.42-3.58-8-8-8zm-6 8c0-1.65.67-3.15 1.76-4.24L6.34 7.34C4.9 8.79 4 10.79 4 13c0 4.08 3.05 7.44 7 7.93v-2.02c-2.83-.48-5-2.94-5-5.91z"/></svg><div style="position:absolute;left:707.5px;top:257.5px;width:57px;height:57px;box-sizing:border-box;background:#5b5fae;background-clip:padding-box;border-radius:50%;border:2px solid #dadada"></div><svg style="position:absolute;left:725px;top:271.5px;" width="20" height="28" viewBox="0 0 20 28"><path d="M15.5 4.5L6 14l9.5 9.5" fill="none" stroke="#fff" stroke-width="3.1"/></svg><div style="position:absolute;left:783px;top:280.50px;font-family:'Liberation Sans', sans-serif;font-size:28px;line-height:28px;color:#1d1d1d;font-weight:400;white-space:pre;">Showing 1 to 50 out of 137 events in 58 ms. (Scan Size: 0.00 MB)</div><div style="position:absolute;left:2603px;top:263.84px;font-family:'Liberation Sans', sans-serif;font-size:25px;line-height:25px;color:#1a1a1a;font-weight:400;white-space:pre;">50</div><svg style="position:absolute;left:2646px;top:273px;" width="20" height="10" viewBox="0 0 20 10"><path d="M0 0h20L10 10z" fill="#757575"/></svg><div style="position:absolute;left:2603px;top:315px;width:77px;height:2px;background:#b0b0b0"></div><svg style="position:absolute;left:2697px;top:265px;" width="36" height="24" viewBox="0 0 36 24"><path d="M18 0v24L0 12zM36 0v24L18 12z" fill="#8a8fc8"/></svg><div style="position:absolute;left:2748px;top:247.5px;width:56px;height:59px;box-sizing:border-box;background:#5b5fae;border:2px solid #d2d3de;border-radius:6px"></div><div style="position:absolute;left:2276px;width:1000px;text-align:center;top:262.30px;font-family:'Liberation Sans', sans-serif;font-size:28px;line-height:28px;color:#fff;font-weight:400;white-space:pre;">1</div><div style="position:absolute;left:2336px;width:1000px;text-align:center;top:262.30px;font-family:'Liberation Sans', sans-serif;font-size:28px;line-height:28px;color:#5b5fae;font-weight:400;white-space:pre;">2</div><div style="position:absolute;left:2396px;width:1000px;text-align:center;top:262.30px;font-family:'Liberation Sans', sans-serif;font-size:28px;line-height:28px;color:#5b5fae;font-weight:400;white-space:pre;">3</div><svg style="position:absolute;left:2939px;top:265px;" width="36" height="24" viewBox="0 0 36 24"><path d="M0 0v24L18 12zM18 0v24L36 12z" fill="#5b5fae"/></svg><div style="position:absolute;left:832px;top:345px;width:2153px;height:1.5px;background:#e0e6f1"></div><div style="position:absolute;left:832px;top:363px;width:2153px;height:1.5px;background:#e0e6f1"></div><div style="position:absolute;left:832px;top:429px;width:2153px;height:1.5px;background:#e0e6f1"></div><div style="position:absolute;left:831px;top:344px;width:2px;height:152px;background:#6e7079"></div><div style="position:absolute;left:831px;top:494.5px;width:2155px;height:2px;background:#6e7079"></div><div style="position:absolute;right:2210px;top:350.61px;font-family:'Liberation Sans', sans-serif;font-size:23.5px;line-height:23.5px;color:#6e7079;font-weight:400;white-space:pre;">106</div><div style="position:absolute;right:2210px;top:417.61px;font-family:'Liberation Sans', sans-serif;font-size:23.5px;line-height:23.5px;color:#6e7079;font-weight:400;white-space:pre;">53</div><div style="position:absolute;right:2210px;top:484.11px;font-family:'Liberation Sans', sans-serif;font-size:23.5px;line-height:23.5px;color:#6e7079;font-weight:400;white-space:pre;">0</div><div style="position:absolute;left:868.7px;top:496px;width:2px;height:9px;background:#6e7079"></div><div style="position:absolute;left:369.70000000000005px;width:1000px;text-align:center;top:512.11px;font-family:'Liberation Sans', sans-serif;font-size:23.5px;line-height:23.5px;color:#6e7079;font-weight:400;white-space:pre;">12:00</div><div style="position:absolute;left:1139px;top:496px;width:2px;height:9px;background:#6e7079"></div><div style="position:absolute;left:640px;width:1000px;text-align:center;top:512.11px;font-family:'Liberation Sans', sans-serif;font-size:23.5px;line-height:23.5px;color:#6e7079;font-weight:400;white-space:pre;">18:00</div><div style="position:absolute;left:1410.7px;top:496px;width:2px;height:9px;background:#6e7079"></div><div style="position:absolute;left:911.7px;width:1000px;text-align:center;top:512.11px;font-family:'Liberation Sans', sans-serif;font-size:23.5px;line-height:23.5px;color:#6e7079;font-weight:700;white-space:pre;">16</div><div style="position:absolute;left:1680.7px;top:496px;width:2px;height:9px;background:#6e7079"></div><div style="position:absolute;left:1181.7px;width:1000px;text-align:center;top:512.11px;font-family:'Liberation Sans', sans-serif;font-size:23.5px;line-height:23.5px;color:#6e7079;font-weight:400;white-space:pre;">06:00</div><div style="position:absolute;left:1953px;top:496px;width:2px;height:9px;background:#6e7079"></div><div style="position:absolute;left:1454px;width:1000px;text-align:center;top:512.11px;font-family:'Liberation Sans', sans-serif;font-size:23.5px;line-height:23.5px;color:#6e7079;font-weight:400;white-space:pre;">12:00</div><div style="position:absolute;left:2222.6px;top:496px;width:2px;height:9px;background:#6e7079"></div><div style="position:absolute;left:1723.6px;width:1000px;text-align:center;top:512.11px;font-family:'Liberation Sans', sans-serif;font-size:23.5px;line-height:23.5px;color:#6e7079;font-weight:400;white-space:pre;">18:00</div><div style="position:absolute;left:2494.9px;top:496px;width:2px;height:9px;background:#6e7079"></div><div style="position:absolute;left:1995.9px;width:1000px;text-align:center;top:512.11px;font-family:'Liberation Sans', sans-serif;font-size:23.5px;line-height:23.5px;color:#6e7079;font-weight:700;white-space:pre;">17</div><div style="position:absolute;left:2764.7px;top:496px;width:2px;height:9px;background:#6e7079"></div><div style="position:absolute;left:2265.7px;width:1000px;text-align:center;top:512.11px;font-family:'Liberation Sans', sans-serif;font-size:23.5px;line-height:23.5px;color:#6e7079;font-weight:400;white-space:pre;">06:00</div><div style="position:absolute;left:2051px;top:456px;width:31px;height:39px;background:#7b83c0"></div><div style="position:absolute;left:2954px;top:362px;width:31px;height:133px;background:#7b83c0"></div><div style="position:absolute;left:735px;top:535px;width:2289px;height:46px;background:#f4f4f4"></div><div style="position:absolute;left:735px;top:584px;width:2289px;height:2px;background:#e4e4ea"></div><div style="position:absolute;left:749px;top:543.72px;font-family:'Liberation Sans', sans-serif;font-size:27.5px;line-height:27.5px;color:#111;font-weight:700;white-space:pre;">timestamp (Asia/Calcutta)</div><div style="position:absolute;left:1269px;top:543.72px;font-family:'Liberation Sans', sans-serif;font-size:27.5px;line-height:27.5px;color:#111;font-weight:700;white-space:pre;letter-spacing:-0.9px">source</div><div style="position:absolute;left:735px;top:628px;width:2289px;height:2px;background:#e4e4ea"></div><svg style="position:absolute;left:759px;top:601px;" width="16" height="12" viewBox="0 0 16 12"><path d="M2 2l6 6 6-6" fill="none" stroke="#000" stroke-width="2.6"/></svg><div style="position:absolute;left:795px;top:596.30px;font-family:'Liberation Mono', monospace;font-size:24px;line-height:24px;color:#000;font-weight:400;white-space:pre;;transform:scaleY(1.1);transform-origin:0 18.40px;-webkit-text-stroke:0.3px #000">2025-09-17 10:59:26.518</div><div style="position:absolute;left:1270px;top:596.30px;font-family:'Liberation Mono', monospace;font-size:24px;line-height:24px;color:#000;font-weight:400;white-space:pre;;transform:scaleY(1.1);transform-origin:0 18.40px;-webkit-text-stroke:0.3px #000">{"_timestamp":1758086966518070,"app_name":"demov2","body":"Received request on /hello","name":"MuleApp","severitytext":"INFO","thread":"","timeunixnano":1758086966518323422000}</div><div style="position:absolute;left:767px;top:641px;width:273px;height:44px;box-sizing:border-box;border:2px solid #d6d6d6;border-radius:5px"></div><svg style="position:absolute;left:783px;top:650px;" width="24" height="26" viewBox="0 0 24 26"><path d="M3 13V3.2H14" fill="none" stroke="#000" stroke-width="2.2"/><rect x="7.3" y="7.3" width="12.5" height="16" rx="1.8" fill="none" stroke="#000" stroke-width="2.2"/></svg><div style="position:absolute;left:819px;top:654.37px;font-family:'Liberation Mono', monospace;font-size:20px;line-height:20px;color:#000;font-weight:400;white-space:pre;;transform:scaleY(1.1);transform-origin:0 15.33px;-webkit-text-stroke:0.25px #000">Copy to clipboard</div><div style="position:absolute;left:767px;top:699.60px;font-family:'Liberation Mono', monospace;font-size:24px;line-height:24px;color:#000;font-weight:400;white-space:pre;;transform:scaleY(1.1);transform-origin:0 18.40px;-webkit-text-stroke:0.3px #000">{</div><svg style="position:absolute;left:795px;top:746.1px;" width="11" height="7" viewBox="0 0 11 7"><path d="M0 0h11L5.5 7z" fill="#000"/></svg><div style="position:absolute;left:828px;top:737.20px;font-family:'Liberation Mono', monospace;font-size:24px;line-height:24px;white-space:pre;transform:scaleY(1.1);transform-origin:0 18.4px"><span style="color:#a8322d;-webkit-text-stroke:0.3px #a8322d">_timestamp:</span><span style="color:#000;margin-left:7px;-webkit-text-stroke:0.3px #000">1758086966518070,</span></div><svg style="position:absolute;left:795px;top:783.78px;" width="11" height="7" viewBox="0 0 11 7"><path d="M0 0h11L5.5 7z" fill="#000"/></svg><div style="position:absolute;left:828px;top:774.88px;font-family:'Liberation Mono', monospace;font-size:24px;line-height:24px;white-space:pre;transform:scaleY(1.1);transform-origin:0 18.4px"><span style="color:#a8322d;-webkit-text-stroke:0.3px #a8322d">app_name:</span><span style="color:#000;margin-left:7px;-webkit-text-stroke:0.3px #000">demov2,</span></div><svg style="position:absolute;left:795px;top:821.46px;" width="11" height="7" viewBox="0 0 11 7"><path d="M0 0h11L5.5 7z" fill="#000"/></svg><div style="position:absolute;left:828px;top:812.56px;font-family:'Liberation Mono', monospace;font-size:24px;line-height:24px;white-space:pre;transform:scaleY(1.1);transform-origin:0 18.4px"><span style="color:#a8322d;-webkit-text-stroke:0.3px #a8322d">body:</span><span style="color:#000;margin-left:7px;-webkit-text-stroke:0.3px #000">Received request on /hello,</span></div><svg style="position:absolute;left:795px;top:859.14px;" width="11" height="7" viewBox="0 0 11 7"><path d="M0 0h11L5.5 7z" fill="#000"/></svg><div style="position:absolute;left:828px;top:850.24px;font-family:'Liberation Mono', monospace;font-size:24px;line-height:24px;white-space:pre;transform:scaleY(1.1);transform-origin:0 18.4px"><span style="color:#a8322d;-webkit-text-stroke:0.3px #a8322d">name:</span><span style="color:#000;margin-left:7px;-webkit-text-stroke:0.3px #000">MuleApp,</span></div><svg style="position:absolute;left:795px;top:896.82px;" width="11" height="7" viewBox="0 0 11 7"><path d="M0 0h11L5.5 7z" fill="#000"/></svg><div style="position:absolute;left:828px;top:887.92px;font-family:'Liberation Mono', monospace;font-size:24px;line-height:24px;white-space:pre;transform:scaleY(1.1);transform-origin:0 18.4px"><span style="color:#a8322d;-webkit-text-stroke:0.3px #a8322d">severitytext:</span><span style="color:#000;margin-left:7px;-webkit-text-stroke:0.3px #000">INFO,</span></div><svg style="position:absolute;left:795px;top:934.5px;" width="11" height="7" viewBox="0 0 11 7"><path d="M0 0h11L5.5 7z" fill="#000"/></svg><div style="position:absolute;left:828px;top:925.60px;font-family:'Liberation Mono', monospace;font-size:24px;line-height:24px;white-space:pre;transform:scaleY(1.1);transform-origin:0 18.4px"><span style="color:#a8322d;-webkit-text-stroke:0.3px #a8322d">thread:</span><span style="color:#000;margin-left:7px;-webkit-text-stroke:0.3px #000">,</span></div><svg style="position:absolute;left:795px;top:972.1800000000001px;" width="11" height="7" viewBox="0 0 11 7"><path d="M0 0h11L5.5 7z" fill="#000"/></svg><div style="position:absolute;left:828px;top:963.28px;font-family:'Liberation Mono', monospace;font-size:24px;line-height:24px;white-space:pre;transform:scaleY(1.1);transform-origin:0 18.4px"><span style="color:#a8322d;-webkit-text-stroke:0.3px #a8322d">timeunixnano:</span><span style="color:#000;margin-left:7px;-webkit-text-stroke:0.3px #000">1758086966323422000</span></div><div style="position:absolute;left:767px;top:1001.60px;font-family:'Liberation Mono', monospace;font-size:24px;line-height:24px;color:#000;font-weight:400;white-space:pre;;transform:scaleY(1.1);transform-origin:0 18.40px;-webkit-text-stroke:0.3px #000">}</div><div style="position:absolute;left:735px;top:1040.0px;width:2289px;height:2px;background:#e4e4ea"></div><svg style="position:absolute;left:761px;top:1054.0px;" width="12" height="16" viewBox="0 0 12 16"><path d="M2 2l7 6-7 6" fill="none" stroke="#000" stroke-width="2.6"/></svg><div style="position:absolute;left:795px;top:1051.80px;font-family:'Liberation Mono', monospace;font-size:24px;line-height:24px;color:#000;font-weight:400;white-space:pre;;transform:scaleY(1.1);transform-origin:0 18.40px;-webkit-text-stroke:0.3px #000">2025-09-17 10:59:26.262</div><div style="position:absolute;left:1270px;top:1051.80px;font-family:'Liberation Mono', monospace;font-size:24px;line-height:24px;color:#000;font-weight:400;white-space:pre;;transform:scaleY(1.1);transform-origin:0 18.40px;-webkit-text-stroke:0.3px #000">{"_timestamp":1758086966262049,"app_name":"demov2","body":"Response sent: Hello Mule","name":"MuleApp","severitytext":"INFO","thread":"","timeunixnano":1758086966262323422000}</div><div style="position:absolute;left:735px;top:1083.73px;width:2289px;height:2px;background:#e4e4ea"></div><svg style="position:absolute;left:761px;top:1097.73px;" width="12" height="16" viewBox="0 0 12 16"><path d="M2 2l7 6-7 6" fill="none" stroke="#000" stroke-width="2.6"/></svg><div style="position:absolute;left:795px;top:1095.53px;font-family:'Liberation Mono', monospace;font-size:24px;line-height:24px;color:#000;font-weight:400;white-space:pre;;transform:scaleY(1.1);transform-origin:0 18.40px;-webkit-text-stroke:0.3px #000">2025-09-17 10:59:26.012</div><div style="position:absolute;left:1270px;top:1095.53px;font-family:'Liberation Mono', monospace;font-size:24px;line-height:24px;color:#000;font-weight:400;white-space:pre;;transform:scaleY(1.1);transform-origin:0 18.40px;-webkit-text-stroke:0.3px #000">{"_timestamp":1758086966012704,"app_name":"demov2","body":"Response sent: Hello Mule","name":"MuleApp","severitytext":"INFO","thread":"","timeunixnano":1758086966012323422000}</div><div style="position:absolute;left:735px;top:1127.46px;width:2289px;height:2px;background:#e4e4ea"></div><svg style="position:absolute;left:761px;top:1141.46px;" width="12" height="16" viewBox="0 0 12 16"><path d="M2 2l7 6-7 6" fill="none" stroke="#000" stroke-width="2.6"/></svg><div style="position:absolute;left:795px;top:1139.26px;font-family:'Liberation Mono', monospace;font-size:24px;line-height:24px;color:#000;font-weight:400;white-space:pre;;transform:scaleY(1.1);transform-origin:0 18.40px;-webkit-text-stroke:0.3px #000">2025-09-17 10:59:25.775</div><div style="position:absolute;left:1270px;top:1139.26px;font-family:'Liberation Mono', monospace;font-size:24px;line-height:24px;color:#000;font-weight:400;white-space:pre;;transform:scaleY(1.1);transform-origin:0 18.40px;-webkit-text-stroke:0.3px #000">{"_timestamp":1758086965775856,"app_name":"demov2","body":"Received request on /hello","name":"MuleApp","severitytext":"INFO","thread":"","timeunixnano":1758086965775323422000}</div><div style="position:absolute;left:735px;top:1171.19px;width:2289px;height:2px;background:#e4e4ea"></div><svg style="position:absolute;left:761px;top:1185.19px;" width="12" height="16" viewBox="0 0 12 16"><path d="M2 2l7 6-7 6" fill="none" stroke="#000" stroke-width="2.6"/></svg><div style="position:absolute;left:795px;top:1182.99px;font-family:'Liberation Mono', monospace;font-size:24px;line-height:24px;color:#000;font-weight:400;white-space:pre;;transform:scaleY(1.1);transform-origin:0 18.40px;-webkit-text-stroke:0.3px #000">2025-09-17 10:59:25.527</div><div style="position:absolute;left:1270px;top:1182.99px;font-family:'Liberation Mono', monospace;font-size:24px;line-height:24px;color:#000;font-weight:400;white-space:pre;;transform:scaleY(1.1);transform-origin:0 18.40px;-webkit-text-stroke:0.3px #000">{"_timestamp":1758086965527728,"app_name":"demov2","body":"Received request on /hello","name":"MuleApp","severitytext":"INFO","thread":"","timeunixnano":1758086965527323422000}</div><div style="position:absolute;left:735px;top:1214.92px;width:2289px;height:2px;background:#e4e4ea"></div><svg style="position:absolute;left:761px;top:1228.92px;" width="12" height="16" viewBox="0 0 12 16"><path d="M2 2l7 6-7 6" fill="none" stroke="#000" stroke-width="2.6"/></svg><div style="position:absolute;left:795px;top:1226.72px;font-family:'Liberation Mono', monospace;font-size:24px;line-height:24px;color:#000;font-weight:400;white-space:pre;;transform:scaleY(1.1);transform-origin:0 18.40px;-webkit-text-stroke:0.3px #000">2025-09-17 10:59:25.275</div><div style="position:absolute;left:1270px;top:1226.72px;font-family:'Liberation Mono', monospace;font-size:24px;line-height:24px;color:#000;font-weight:400;white-space:pre;;transform:scaleY(1.1);transform-origin:0 18.40px;-webkit-text-stroke:0.3px #000">{"_timestamp":1758086965275824,"app_name":"demov2","body":"Response sent: Hello Mule","name":"MuleApp","severitytext":"INFO","thread":"","timeunixnano":1758086965275323422000}</div><div style="position:absolute;left:735px;top:1258.65px;width:2289px;height:2px;background:#e4e4ea"></div><svg style="position:absolute;left:761px;top:1272.65px;" width="12" height="16" viewBox="0 0 12 16"><path d="M2 2l7 6-7 6" fill="none" stroke="#000" stroke-width="2.6"/></svg><div style="position:absolute;left:795px;top:1270.45px;font-family:'Liberation Mono', monospace;font-size:24px;line-height:24px;color:#000;font-weight:400;white-space:pre;;transform:scaleY(1.1);transform-origin:0 18.40px;-webkit-text-stroke:0.3px #000">2025-09-17 10:59:25.031</div><div style="position:absolute;left:1270px;top:1270.45px;font-family:'Liberation Mono', monospace;font-size:24px;line-height:24px;color:#000;font-weight:400;white-space:pre;;transform:scaleY(1.1);transform-origin:0 18.40px;-webkit-text-stroke:0.3px #000">{"_timestamp":1758086965031863,"app_name":"demov2","body":"Received request on /hello","name":"MuleApp","severitytext":"INFO","thread":"","timeunixnano":1758086965031323422000}</div><div style="position:absolute;left:735px;top:1302.38px;width:2289px;height:2px;background:#e4e4ea"></div><svg style="position:absolute;left:761px;top:1316.38px;" width="12" height="16" viewBox="0 0 12 16"><path d="M2 2l7 6-7 6" fill="none" stroke="#000" stroke-width="2.6"/></svg><div style="position:absolute;left:795px;top:1314.18px;font-family:'Liberation Mono', monospace;font-size:24px;line-height:24px;color:#000;font-weight:400;white-space:pre;;transform:scaleY(1.1);transform-origin:0 18.40px;-webkit-text-stroke:0.3px #000">2025-09-17 10:59:24.777</div><div style="position:absolute;left:1270px;top:1314.18px;font-family:'Liberation Mono', monospace;font-size:24px;line-height:24px;color:#000;font-weight:400;white-space:pre;;transform:scaleY(1.1);transform-origin:0 18.40px;-webkit-text-stroke:0.3px #000">{"_timestamp":1758086964777630,"app_name":"demov2","body":"Response sent: Hello Mule","name":"MuleApp","severitytext":"INFO","thread":"","timeunixnano":1758086964777323422000}</div><div style="position:absolute;left:735px;top:1346.11px;width:2289px;height:2px;background:#e4e4ea"></div><svg style="position:absolute;left:761px;top:1360.11px;" width="12" height="16" viewBox="0 0 12 16"><path d="M2 2l7 6-7 6" fill="none" stroke="#000" stroke-width="2.6"/></svg><div style="position:absolute;left:795px;top:1357.91px;font-family:'Liberation Mono', monospace;font-size:24px;line-height:24px;color:#000;font-weight:400;white-space:pre;;transform:scaleY(1.1);transform-origin:0 18.40px;-webkit-text-stroke:0.3px #000">2025-09-17 10:53:28.198</div><div style="position:absolute;left:1270px;top:1357.91px;font-family:'Liberation Mono', monospace;font-size:24px;line-height:24px;color:#000;font-weight:400;white-space:pre;;transform:scaleY(1.1);transform-origin:0 18.40px;-webkit-text-stroke:0.3px #000">{"_timestamp":1758086608198488,"app_name":"demov2","body":"Disabling console logging","name":"MuleApp","severitytext":"INFO","thread":"","timeunixnano":1758086608198323422000}</div><div style="position:absolute;left:735px;top:1389.84px;width:2289px;height:2px;background:#e4e4ea"></div><svg style="position:absolute;left:761px;top:1403.84px;" width="12" height="16" viewBox="0 0 12 16"><path d="M2 2l7 6-7 6" fill="none" stroke="#000" stroke-width="2.6"/></svg><div style="position:absolute;left:795px;top:1401.64px;font-family:'Liberation Mono', monospace;font-size:24px;line-height:24px;color:#000;font-weight:400;white-space:pre;;transform:scaleY(1.1);transform-origin:0 18.40px;-webkit-text-stroke:0.3px #000">2025-09-17 10:53:27.952</div><div style="position:absolute;left:1270px;top:1401.64px;font-family:'Liberation Mono', monospace;font-size:24px;line-height:24px;color:#000;font-weight:400;white-space:pre;;transform:scaleY(1.1);transform-origin:0 18.40px;-webkit-text-stroke:0.3px #000">{"_timestamp":1758086607952329,"app_name":"demov2","body":"Started ServerConnector@514dc5f4{HTTP/1.1, (http/1.1)}{127.0.0.1:8081}","name":"MuleApp","severitytext":"INFO","thread":"","timeunixnano":1758086607952323422000}</div><div style="position:absolute;left:735px;top:1433.57px;width:2289px;height:2px;background:#e4e4ea"></div><svg style="position:absolute;left:761px;top:1447.57px;" width="12" height="16" viewBox="0 0 12 16"><path d="M2 2l7 6-7 6" fill="none" stroke="#000" stroke-width="2.6"/></svg><div style="position:absolute;left:795px;top:1445.37px;font-family:'Liberation Mono', monospace;font-size:24px;line-height:24px;color:#000;font-weight:400;white-space:pre;;transform:scaleY(1.1);transform-origin:0 18.40px;-webkit-text-stroke:0.3px #000">2025-09-17 10:53:27.713</div><div style="position:absolute;left:1270px;top:1445.37px;font-family:'Liberation Mono', monospace;font-size:24px;line-height:24px;color:#000;font-weight:400;white-space:pre;;transform:scaleY(1.1);transform-origin:0 18.40px;-webkit-text-stroke:0.3px #000">{"_timestamp":1758086607713381,"app_name":"demov2","body":"Received request on /hello","name":"MuleApp","severitytext":"INFO","thread":"","timeunixnano":1758086607713323422000}</div><div style="position:absolute;left:735px;top:1477.3px;width:2289px;height:2px;background:#e4e4ea"></div><svg style="position:absolute;left:761px;top:1491.3px;" width="12" height="16" viewBox="0 0 12 16"><path d="M2 2l7 6-7 6" fill="none" stroke="#000" stroke-width="2.6"/></svg><div style="position:absolute;left:795px;top:1489.10px;font-family:'Liberation Mono', monospace;font-size:24px;line-height:24px;color:#000;font-weight:400;white-space:pre;;transform:scaleY(1.1);transform-origin:0 18.40px;-webkit-text-stroke:0.3px #000">2025-09-17 10:53:27.420</div><div style="position:absolute;left:1270px;top:1489.10px;font-family:'Liberation Mono', monospace;font-size:24px;line-height:24px;color:#000;font-weight:400;white-space:pre;;transform:scaleY(1.1);transform-origin:0 18.40px;-webkit-text-stroke:0.3px #000">{"_timestamp":1758086607420100,"app_name":"demov2","body":"Response sent: Hello Mule","name":"MuleApp","severitytext":"INFO","thread":"","timeunixnano":1758086607420323422000}</div><div style="position:absolute;left:735px;top:1521.03px;width:2289px;height:2px;background:#e4e4ea"></div><svg style="position:absolute;left:761px;top:1535.03px;" width="12" height="16" viewBox="0 0 12 16"><path d="M2 2l7 6-7 6" fill="none" stroke="#000" stroke-width="2.6"/></svg><div style="position:absolute;left:795px;top:1532.83px;font-family:'Liberation Mono', monospace;font-size:24px;line-height:24px;color:#000;font-weight:400;white-space:pre;;transform:scaleY(1.1);transform-origin:0 18.40px;-webkit-text-stroke:0.3px #000">2025-09-17 10:53:27.142</div><div style="position:absolute;left:1270px;top:1532.83px;font-family:'Liberation Mono', monospace;font-size:24px;line-height:24px;color:#000;font-weight:400;white-space:pre;;transform:scaleY(1.1);transform-origin:0 18.40px;-webkit-text-stroke:0.3px #000">{"_timestamp":1758086607142304,"app_name":"demov2","body":"Response sent: Hello Mule","name":"MuleApp","severitytext":"INFO","thread":"","timeunixnano":1758086607142323422000}</div><div style="position:absolute;left:735px;top:1564.76px;width:2289px;height:2px;background:#e4e4ea"></div><svg style="position:absolute;left:761px;top:1578.76px;" width="12" height="16" viewBox="0 0 12 16"><path d="M2 2l7 6-7 6" fill="none" stroke="#000" stroke-width="2.6"/></svg><div style="position:absolute;left:795px;top:1576.56px;font-family:'Liberation Mono', monospace;font-size:24px;line-height:24px;color:#000;font-weight:400;white-space:pre;;transform:scaleY(1.1);transform-origin:0 18.40px;-webkit-text-stroke:0.3px #000">2025-09-17 10:53:26.868</div><div style="position:absolute;left:1270px;top:1576.56px;font-family:'Liberation Mono', monospace;font-size:24px;line-height:24px;color:#000;font-weight:400;white-space:pre;;transform:scaleY(1.1);transform-origin:0 18.40px;-webkit-text-stroke:0.3px #000">{"_timestamp":1758086606868112,"app_name":"demov2","body":"Received request on /hello","name":"MuleApp","severitytext":"INFO","thread":"","timeunixnano":1758086606868323422000}</div><div style="position:absolute;left:735px;top:1608.49px;width:2289px;height:2px;background:#e4e4ea"></div><svg style="position:absolute;left:761px;top:1622.49px;" width="12" height="16" viewBox="0 0 12 16"><path d="M2 2l7 6-7 6" fill="none" stroke="#000" stroke-width="2.6"/></svg><div style="position:absolute;left:795px;top:1620.29px;font-family:'Liberation Mono', monospace;font-size:24px;line-height:24px;color:#000;font-weight:400;white-space:pre;;transform:scaleY(1.1);transform-origin:0 18.40px;-webkit-text-stroke:0.3px #000">2025-09-17 10:53:26.578</div><div style="position:absolute;left:1270px;top:1620.29px;font-family:'Liberation Mono', monospace;font-size:24px;line-height:24px;color:#000;font-weight:400;white-space:pre;;transform:scaleY(1.1);transform-origin:0 18.40px;-webkit-text-stroke:0.3px #000">{"_timestamp":1758086606578786,"app_name":"demov2","body":"Received request on /hello","name":"MuleApp","severitytext":"INFO","thread":"","timeunixnano":1758086606578323422000}</div>
</div></body></html>
